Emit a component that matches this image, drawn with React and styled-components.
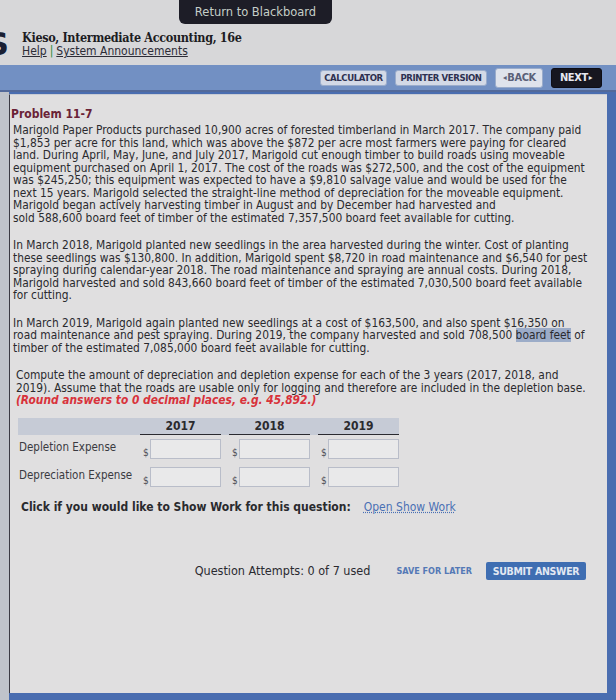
import React from 'react';
import styled, { createGlobalStyle } from 'styled-components';

const GlobalStyle = createGlobalStyle`
  html, body {
    margin: 0;
    padding: 0;
    background: #d7d7d9;
  }
  * {
    box-sizing: border-box;
  }
`;

const PARAGRAPHS = [
  [
    'Marigold Paper Products purchased 10,900 acres of forested timberland in March 2017. The company paid',
    '$1,853 per acre for this land, which was above the $872 per acre most farmers were paying for cleared',
    'land. During April, May, June, and July 2017, Marigold cut enough timber to build roads using moveable',
    'equipment purchased on April 1, 2017. The cost of the roads was $272,500, and the cost of the equipment',
    'was $245,250; this equipment was expected to have a $9,810 salvage value and would be used for the',
    'next 15 years. Marigold selected the straight-line method of depreciation for the moveable equipment.',
    'Marigold began actively harvesting timber in August and by December had harvested and',
    'sold 588,600 board feet of timber of the estimated 7,357,500 board feet available for cutting.',
  ],
  [
    'In March 2018, Marigold planted new seedlings in the area harvested during the winter. Cost of planting',
    'these seedlings was $130,800. In addition, Marigold spent $8,720 in road maintenance and $6,540 for pest',
    'spraying during calendar-year 2018. The road maintenance and spraying are annual costs. During 2018,',
    'Marigold harvested and sold 843,660 board feet of timber of the estimated 7,030,500 board feet available',
    'for cutting.',
  ],
];

const YEARS = ['2017', '2018', '2019'];
const ROWS = ['Depletion Expense', 'Depreciation Expense'];

const App = () => {
  return (
    <Page>
      <GlobalStyle />
      <Header>
        <BlackboardTab>Return to Blackboard</BlackboardTab>
        <BrandRow>
          <LogoGlyph>S</LogoGlyph>
          <BrandText>
            <BookTitle>Kieso, Intermediate Accounting, 16e</BookTitle>
            <HelpLinks>
              <TopLink>Help</TopLink>
              <Divider>|</Divider>
              <TopLink>System Announcements</TopLink>
            </HelpLinks>
          </BrandText>
        </BrandRow>
      </Header>

      <NavBar>
        <NavButton $w={67}>CALCULATOR</NavButton>
        <NavButton $w={92}>PRINTER VERSION</NavButton>
        <NavButton $w={48} $variant="back">
          <Arrow>◂</Arrow>BACK
        </NavButton>
        <NavButton $w={51} $variant="next">
          NEXT<Arrow>▸</Arrow>
        </NavButton>
      </NavBar>

      <Frame>
        <Panel>
          <ProblemTitle>Problem 11-7</ProblemTitle>
          {PARAGRAPHS.map((lines, i) => (
            <Paragraph key={i}>
              {lines.map(line => (
                <Line key={line}>{line}</Line>
              ))}
            </Paragraph>
          ))}
          <Paragraph>
            <Line>In March 2019, Marigold again planted new seedlings at a cost of $163,500, and also spent $16,350 on</Line>
            <Line>
              road maintenance and pest spraying. During 2019, the company harvested and sold 708,500{' '}
              <Highlight>board feet</Highlight> of
            </Line>
            <Line>timber of the estimated 7,085,000 board feet available for cutting.</Line>
          </Paragraph>
          <Paragraph $indent={5}>
            <Line>Compute the amount of depreciation and depletion expense for each of the 3 years (2017, 2018, and</Line>
            <Line>2019). Assume that the roads are usable only for logging and therefore are included in the depletion base.</Line>
            <RoundNote>(Round answers to 0 decimal places, e.g. 45,892.)</RoundNote>
          </Paragraph>

          <AnswerTable>
            <HeaderBand>
              <span />
              {YEARS.map(year => (
                <YearCell key={year}>{year}</YearCell>
              ))}
            </HeaderBand>
            {ROWS.map(row => (
              <AnswerRow key={row}>
                <RowLabel>{row}</RowLabel>
                {YEARS.map(year => (
                  <AmountCell key={year}>
                    <Dollar>$</Dollar>
                    <AmountInput />
                  </AmountCell>
                ))}
              </AnswerRow>
            ))}
          </AnswerTable>

          <ShowWork>
            Click if you would like to Show Work for this question:
            <ShowWorkLink>Open Show Work</ShowWorkLink>
          </ShowWork>

          <Actions>
            <Attempts>Question Attempts: 0 of 7 used</Attempts>
            <SaveLater>SAVE FOR LATER</SaveLater>
            <SubmitButton>SUBMIT ANSWER</SubmitButton>
          </Actions>
        </Panel>
      </Frame>
    </Page>
  );
};

const Page = styled.div`
  width: 616px;
  height: 700px;
  display: flex;
  flex-direction: column;
  overflow: hidden;
  background: #d7d7d9;
  font-family: 'DejaVu Sans Condensed', 'DejaVu Sans', sans-serif;
  color: #2a2a2e;
`;

const Header = styled.div`
  height: 65px;
  flex-shrink: 0;
  display: flex;
  flex-direction: column;
`;

const BlackboardTab = styled.div`
  margin-left: 179px;
  width: 153px;
  height: 24px;
  display: flex;
  align-items: center;
  justify-content: center;
  background: #1d1d27;
  border-radius: 0 0 6px 6px;
  color: #c6cfc8;
  font-size: 11.5px;
  font-family: 'DejaVu Sans', sans-serif;
`;

const BrandRow = styled.div`
  display: flex;
  align-items: center;
  margin-top: 4px;
  gap: 13px;
`;

const LogoGlyph = styled.span`
  margin-left: -14px;
  font-family: 'DejaVu Sans', sans-serif;
  font-weight: bold;
  font-size: 32px;
  line-height: 1;
  color: #1a1f33;
`;

const BrandText = styled.div`
  display: flex;
  flex-direction: column;
`;

const BookTitle = styled.div`
  font-family: 'DejaVu Serif Condensed', 'DejaVu Serif', serif;
  font-weight: bold;
  font-size: 12.5px;
  letter-spacing: -0.35px;
  line-height: 15px;
  color: #1c1c22;
`;

const HelpLinks = styled.div`
  display: flex;
  gap: 3px;
  font-size: 12px;
  line-height: 13px;
`;

const TopLink = styled.span`
  text-decoration: underline;
  color: #2c2c36;
`;

const Divider = styled.span`
  color: #2d8a3a;
`;

const NavBar = styled.div`
  height: 27px;
  flex-shrink: 0;
  display: flex;
  align-items: center;
  justify-content: flex-end;
  gap: 8px;
  padding-right: 14px;
  background: #7290c3;
  border-bottom: 2px solid #52699a;
`;

const NavButton = styled.div`
  width: ${({ $w }) => $w}px;
  height: ${({ $variant }) => ($variant ? '20px' : '16px')};
  display: flex;
  align-items: center;
  justify-content: center;
  border-radius: 3px;
  font-weight: bold;
  font-size: ${({ $variant }) => ($variant ? '11px' : '9.5px')};
  letter-spacing: -0.4px;
  background: ${({ $variant }) =>
    $variant === 'next' ? '#16161f' : $variant === 'back' ? '#dfe3ec' : '#d3d9e6'};
  color: ${({ $variant }) => ($variant === 'next' ? '#e6e8f0' : $variant === 'back' ? '#5a6078' : '#2e3150')};
  border: 1px solid ${({ $variant }) => ($variant === 'next' ? '#0e0e16' : '#9aaccb')};
`;

const Arrow = styled.span`
  font-size: 8px;
  margin: 0 1px;
`;

const Frame = styled.div`
  flex: 1;
  display: flex;
  padding: 2px 9px 7px 9px;
  background: linear-gradient(to right, #bfc3cb 9px, #4a6db0 9px);
`;

const Panel = styled.div`
  flex: 1;
  display: flex;
  flex-direction: column;
  padding: 12px 4px 0 1px;
  background: #e0dfe0;
  border-left: 1.5px solid #3a3a44;
  border-top: 1px solid #c9ccd4;
`;

const ProblemTitle = styled.div`
  font-weight: bold;
  font-size: 12px;
  line-height: 14px;
  color: #6a2236;
`;

const Paragraph = styled.div`
  margin: 3px 0 12px;
  padding-left: ${({ $indent }) => $indent || 2}px;
  font-size: 11.85px;
  line-height: 12.5px;
`;

const Line = styled.div`
  white-space: nowrap;
`;

const Highlight = styled.span`
  background: #9cacc8;
`;

const RoundNote = styled.div`
  font-weight: bold;
  font-style: italic;
  color: #d8323a;
  white-space: nowrap;
`;

const AnswerTable = styled.div`
  display: flex;
  flex-direction: column;
  margin-left: 7px;
  margin-top: -1px;
`;

const tableColumns = `
  display: grid;
  grid-template-columns: 114px 81px 81px 81px;
  column-gap: 8px;
  width: 381px;
`;

const HeaderBand = styled.div`
  ${tableColumns}
  height: 17px;
  background: #c6cbd6;
`;

const YearCell = styled.div`
  display: flex;
  align-items: center;
  justify-content: center;
  font-weight: bold;
  font-size: 12px;
  border-bottom: 1.5px solid #2a2a30;
`;

const AnswerRow = styled.div`
  ${tableColumns}
  height: 28px;
  align-items: center;
`;

const RowLabel = styled.div`
  padding-left: 1px;
  margin-top: -3px;
  font-size: 11.5px;
  color: #3a3a40;
  white-space: nowrap;
`;

const AmountCell = styled.div`
  display: flex;
  align-items: flex-end;
  gap: 2px;
`;

const Dollar = styled.span`
  width: 8px;
  padding-left: 3px;
  font-size: 10px;
  line-height: 10px;
  margin-bottom: 1px;
  color: #505058;
`;

const AmountInput = styled.div`
  width: 72px;
  height: 20px;
  background: #e9e9ea;
  border: 1px solid #b9bdc9;
`;

const ShowWork = styled.div`
  margin: 9px 0 0 10px;
  display: flex;
  gap: 13px;
  font-weight: bold;
  font-size: 12px;
  color: #2a2a2e;
`;

const ShowWorkLink = styled.span`
  font-weight: normal;
  color: #4a70b4;
  text-decoration: underline dotted;
`;

const Actions = styled.div`
  margin-top: 48px;
  display: flex;
  align-items: center;
  justify-content: flex-end;
  padding-right: 17px;
`;

const Attempts = styled.span`
  font-size: 12.5px;
  color: #2a2a30;
  margin-right: 26px;
`;

const SaveLater = styled.span`
  font-weight: bold;
  font-size: 9px;
  color: #5479b6;
  margin-right: 14px;
`;

const SubmitButton = styled.div`
  width: 100px;
  height: 18px;
  display: flex;
  align-items: center;
  justify-content: center;
  border-radius: 2px;
  background: #3f6eb2;
  color: #e3e8f2;
  font-weight: bold;
  font-size: 10.5px;
  letter-spacing: -0.3px;
`;

export default App;
